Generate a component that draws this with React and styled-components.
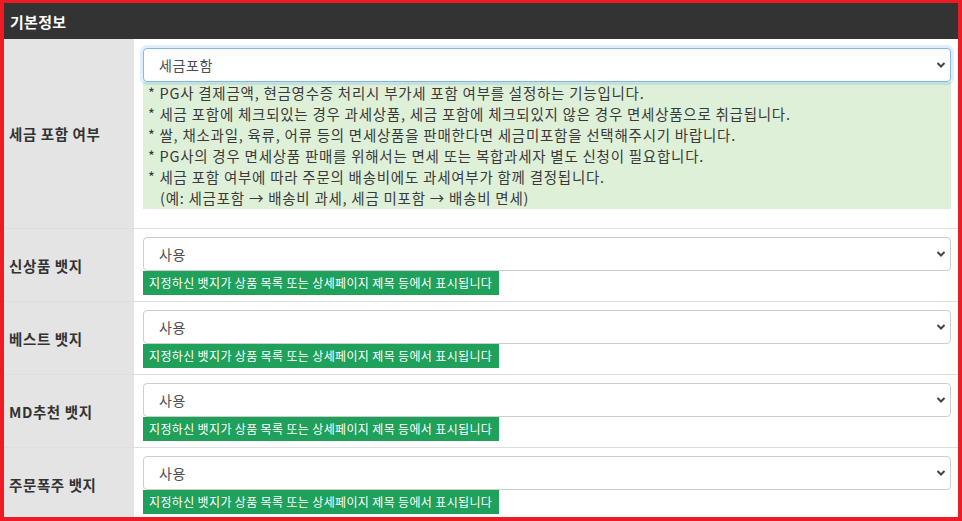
import React from 'react'
import styled, { createGlobalStyle, css } from 'styled-components'

const GlobalStyle = createGlobalStyle`
  html, body {
    margin: 0;
    padding: 0;
    background: #fff;
  }
  body {
    font-family: 'Noto Sans CJK KR', 'Noto Sans', sans-serif;
    color: #333;
  }
  * { box-sizing: border-box; }
`

const Frame = styled.div`
  width: 962px;
  height: 521px;
  border: 4px solid #ed1c24;
  border-top-width: 3px;
  overflow: hidden;
  display: flex;
  flex-direction: column;
`

const Title = styled.div`
  height: 36px;
  flex-shrink: 0;
  background: #333;
  color: #fff;
  font-size: 15px;
  font-weight: 700;
  letter-spacing: 0.3px;
  display: flex;
  align-items: center;
  padding-left: 6px;
`

const Row = styled.div`
  display: flex;
  border-bottom: 1px solid #dedede;
  flex-shrink: 0;
`

const Label = styled.div`
  width: 130px;
  flex-shrink: 0;
  background: #e4e4e4;
  display: flex;
  align-items: center;
  padding-left: 5px;
  font-size: 14.5px;
  font-weight: 700;
  color: #333;
  letter-spacing: 0.6px;
`

const Cell = styled.div`
  flex: 1;
  padding: ${p => (p.tall ? '9px 7px 19px 9px' : '8px 7px 6px 9px')};
  display: flex;
  flex-direction: column;
`

const SelectWrap = styled.div`
  position: relative;
`

const Select = styled.select`
  width: 100%;
  height: 34px;
  appearance: none;
  -webkit-appearance: none;
  border: 1px solid #cdcdcd;
  border-radius: 4px;
  background: #fff;
  font-family: inherit;
  font-size: 14px;
  letter-spacing: 0.6px;
  color: #495057;
  padding: 0 30px 0 15px;
  outline: none;
  ${p =>
    p.focused &&
    css`
      border-color: #86b7ea;
      box-shadow: 0 0 0 3px rgba(0, 123, 255, 0.12);
    `}
`

const Chevron = styled.svg`
  position: absolute;
  right: 5px;
  top: 13px;
  width: 10px;
  height: 8px;
  pointer-events: none;
`

const Notice = styled.div`
  background: #dff0d8;
  padding: 0 0 1px 5px;
  font-size: 14.5px;
  line-height: 21px;
  color: #3a3a3a;
  letter-spacing: 0.75px;
`

const Line = styled.div`
  padding-left: ${p => (p.indent ? '12px' : '0')};
`

const Badge = styled.div`
  align-self: flex-start;
  background: #1fa05b;
  color: #fff;
  font-size: 12px;
  height: 24px;
  line-height: 24px;
  padding: 0 7px 0 6px;
  letter-spacing: 0.35px;
`

const SelectBox = ({ value, focused }) => (
  <SelectWrap>
    <Select focused={focused} defaultValue={value}>
      <option>{value}</option>
    </Select>
    <Chevron viewBox="0 0 10 8">
      <path d="M1.5 2 L5 5.5 L8.5 2" fill="none" stroke="#444" strokeWidth="2" />
    </Chevron>
  </SelectWrap>
)

const notes = [
  '* PG사 결제금액, 현금영수증 처리시 부가세 포함 여부를 설정하는 기능입니다.',
  '* 세금 포함에 체크되있는 경우 과세상품, 세금 포함에 체크되있지 않은 경우 면세상품으로 취급됩니다.',
  '* 쌀, 채소과일, 육류, 어류 등의 면세상품을 판매한다면 세금미포함을 선택해주시기 바랍니다.',
  '* PG사의 경우 면세상품 판매를 위해서는 면세 또는 복합과세자 별도 신청이 필요합니다.',
  '* 세금 포함 여부에 따라 주문의 배송비에도 과세여부가 함께 결정됩니다.',
]

const badges = ['신상품 뱃지', '베스트 뱃지', 'MD추천 뱃지', '주문폭주 뱃지']

export default function App() {
  return (
    <Frame>
      <GlobalStyle />
      <Title>기본정보</Title>
      <Row>
        <Label>세금 포함 여부</Label>
        <Cell tall>
          <SelectBox value="세금포함" focused />
          <Notice>
            {notes.map(n => (
              <Line key={n}>{n}</Line>
            ))}
            <Line indent>(예: 세금포함 → 배송비 과세, 세금 미포함 → 배송비 면세)</Line>
          </Notice>
        </Cell>
      </Row>
      {badges.map(b => (
        <Row key={b}>
          <Label>{b}</Label>
          <Cell>
            <SelectBox value="사용" />
            <Badge>지정하신 뱃지가 상품 목록 또는 상세페이지 제목 등에서 표시됩니다</Badge>
          </Cell>
        </Row>
      ))}
    </Frame>
  )
}
